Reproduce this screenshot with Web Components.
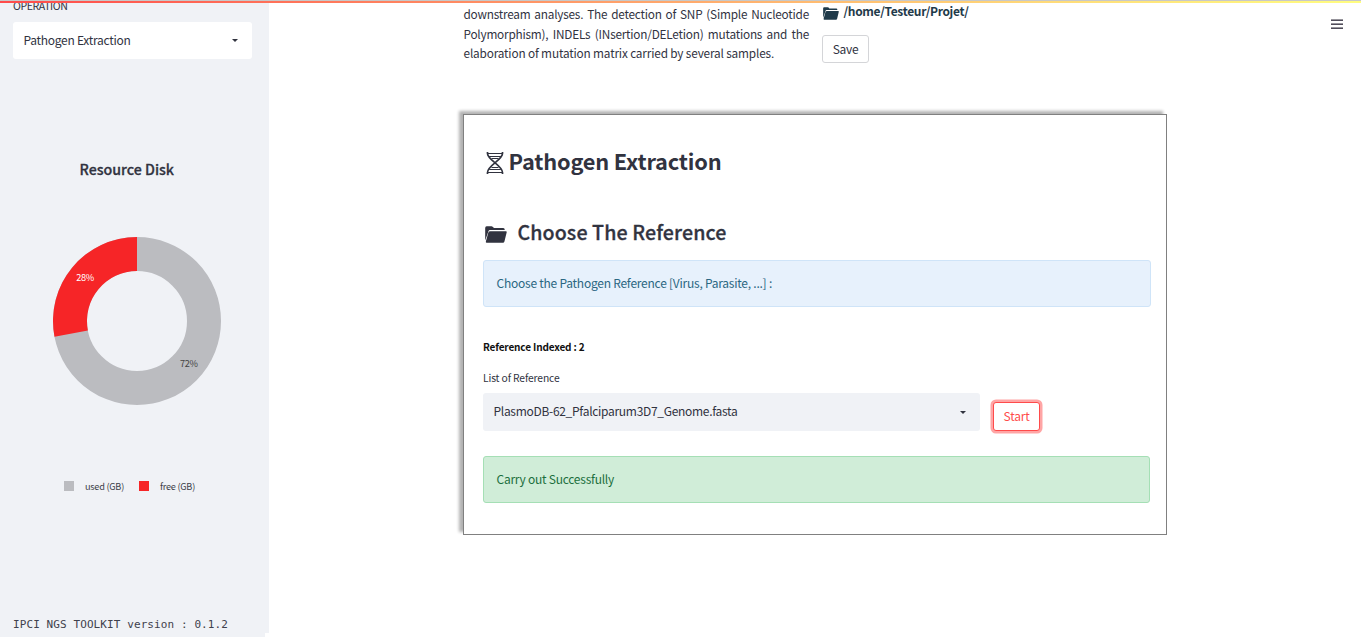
<!DOCTYPE html>
<html lang="en">
<head>
<meta charset="utf-8">
<title>IPCI NGS Toolkit</title>
<style>
html,body{margin:0;height:100%;overflow:hidden;background:#fff}
body{font-family:"Noto Sans CJK SC","Noto Sans",sans-serif;color:#31333f;font-size:12px}
</style>
</head>
<body>
<ngs-app></ngs-app>
<script>
function define(name, html, ready) {
  const t = document.createElement('template');
  t.innerHTML = html;
  customElements.define(name, class extends HTMLElement {
    connectedCallback() {
      if (this.shadowRoot) return;
      this.attachShadow({mode: 'open'}).append(t.content.cloneNode(true));
      if (ready) ready(this);
    }
  });
}

/* One line of text, tracked so that it spans the width given in "w". */
define('text-line', `<style>:host{display:block;white-space:pre;width:max-content}span{display:inline-block}</style><span><slot></slot></span>`, el => {
  const w = +el.getAttribute('w'), n = el.textContent.length;
  if (!w) return;
  const s = el.shadowRoot.querySelector('span');
  const now = s.getBoundingClientRect().width;
  s.style.letterSpacing = ((w - now) / n).toFixed(3) + 'px';
});

define('folder-icon', `<style>:host{display:block;flex:none}svg{display:block;width:100%;height:100%}</style>
<svg viewBox="0 0 23 17" preserveAspectRatio="none"><path fill="currentColor" d="M1.7.2h5.1q.7 0 1.2.5l1.1 1.1q.4.3 1 .3h9q1.5 0 1.5 1.5v.4H5.2q-1.2 0-1.6 1.2L.2 14.5V1.9Q.2.2 1.7.2z"/><path fill="currentColor" d="M5.6 5.2h16.3q1 0 .8 1l-2.4 9.2q-.3 1.3-1.6 1.3H1.8q-1.2 0-.9-1.2L3.5 6.6q.4-1.4 2.1-1.4z"/></svg>`);

define('dna-icon', `<style>:host{display:block;flex:none;width:18px;height:22px}svg{display:block}</style>
<svg width="18" height="22" viewBox="0 0 18 22" fill="none" stroke="currentColor"><path stroke-width="1.700" d="M1.500 0v1.500C1.500 8 16.500 13.500 16.500 20.500V22M16.500 0v1.500C16.500 8 1.500 13.500 1.500 20.500V22"/><path stroke-width="1.100" d="M2 1.500h14M3 4.500h12M5.500 6.500h7M5.500 15.500h7M3.200 17.500h11.600M2 20.500h14"/></svg>`);

define('select-box', `<style>
:host{display:flex;align-items:center;justify-content:space-between;box-sizing:border-box;padding:0 14px 0 10.500px;border-radius:3px}
i{width:0;height:0;border:3px solid transparent;border-top:3.500px solid #31333f;border-bottom:0}
::slotted(*){margin-top:-2px}
</style><slot></slot><i></i>`);

define('alert-box', `<style>
:host{display:flex;align-items:center;box-sizing:border-box;height:47px;padding:0 12.500px;border:1px solid;border-radius:3px}
:host([kind=info]){background:#e7f1fc;border-color:#cfe4f8}:host([kind=success]){background:#d0edd8;border-color:#a5dfb5}
::slotted(*){color:#2b6782;margin-top:-2px}:host([kind=success]) ::slotted(*){color:#1c6f3e}
</style><slot></slot>`);

define('push-button', `<style>
button{display:flex;align-items:center;justify-content:center;box-sizing:border-box;width:47px;height:28px;padding:0 0 2px;background:#fff;border:1px solid #d4d5d8;border-radius:3px;font:inherit;color:inherit}
:host{display:block}
:host([focused]) button{height:29px;color:#ff4b4b;border-color:#ff4b4b;box-shadow:0 0 0 2.500px rgba(255,75,75,.5)}
</style><button><slot></slot></button>`);

define('disk-chart', `<style>
:host{display:flex;flex-direction:column;align-items:flex-start;color:#31333f}
.t{font-size:14.200px;font-weight:500;line-height:20px;margin-left:79.500px;-webkit-text-stroke:.3px}
svg{display:block;margin:58px 0 0 53px}
text{font-size:9.200px}
.legend{display:flex;align-items:center;margin:71px 0 0 64px;height:20px;font-size:9.200px;line-height:20px;color:#3c3e49}
i{width:10px;height:10px}
.a{background:#bbbcc0;margin-right:11px}.b{background:#f62527;margin:0 11px 0 15px}
</style>
<text-line class="t" w="94.5">Resource Disk</text-line>
<svg width="168" height="168" viewBox="0 0 168 168">
<circle cx="84" cy="84" r="67" fill="none" stroke="#bbbcc0" stroke-width="34"/>
<path d="M84 0A84 84 0 0 0 1.480 99.700L34.880 93.400A50 50 0 0 1 84 34z" fill="#f62527"/>
<text x="23.300" y="44" fill="#fff" textLength="18" lengthAdjust="spacing">28%</text>
<text x="127" y="130" fill="#444" textLength="18" lengthAdjust="spacing">72%</text>
</svg>
<div class="legend"><i class="a"></i><text-line w="39">used (GB)</text-line><i class="b"></i><text-line w="35">free (GB)</text-line></div>`);

define('side-bar', `<style>
:host{display:flex;flex-direction:column;position:relative;background:#f0f2f6;height:637px;overflow:hidden}
.op{font-size:10.600px;line-height:16px;margin:-2px 0 0 13px;height:16px}
select-box{background:#fff;margin:8px 17px 0 13px;height:37px}
disk-chart{margin-top:100px}
footer{margin:auto 0 3px 13px;line-height:18px;font-family:"DejaVu Sans Mono",monospace;font-size:11px;color:#3f414c}
.corner{position:absolute;right:0;bottom:0;width:4px;height:4px;background:#fff}
</style>
<text-line class="op" w="54.5">OPERATION</text-line>
<select-box><text-line w="107">Pathogen Extraction</text-line></select-box>
<disk-chart></disk-chart>
<footer><text-line w="215">IPCI NGS TOOLKIT version : 0.1.2</text-line></footer><div class="corner"></div>`);

define('intro-row', `<style>
:host{display:flex;height:114px;box-sizing:border-box;overflow:hidden}
.p{width:345.500px;padding:4px 0 0 .5px;line-height:19.500px;font-size:11.800px}
.p div{text-align:justify;text-align-last:justify;letter-spacing:-.22px}
.r{margin-left:13px}
.path{display:flex;align-items:center;height:20px;color:#1f3a4a;font-weight:700}
folder-icon{width:16px;height:13px;margin:6px 4.500px 0 1px}
push-button{margin-top:15px}
</style>
<div class="p"><div>downstream analyses. The detection of SNP (Simple Nucleotide</div><div>Polymorphism), INDELs (INsertion/DELetion) mutations and the</div><text-line w="310.500">elaboration of mutation matrix carried by several samples.</text-line></div>
<div class="r"><div class="path"><folder-icon></folder-icon><text-line w="125">/home/Testeur/Projet/</text-line></div><push-button><text-line w="25.500">Save</text-line></push-button></div>`);

define('pathogen-card', `<style>
:host{display:block;box-sizing:border-box;width:704px;height:421px;border:1px solid #808080;background:#fff;padding:0 15px 0 19px;box-shadow:-4px -3px 3px rgba(0,0,0,.3)}
h1,h2{display:flex;align-items:center;margin:0}
h1{font-size:21.800px;font-weight:700;line-height:32px;height:32px;padding:30px 0 0 3px}
h1 dna-icon{margin:4px 4.500px 0 0}
h2{font-size:19.600px;font-weight:500;line-height:30px;height:30px;padding:40px 0 0 2px;-webkit-text-stroke:.3px}
h2 folder-icon{width:22px;height:17px;margin:5px 10.500px 0 0}
alert-box[kind=info]{margin-top:13px}
.count{font-size:10px;font-weight:700;color:#111;line-height:16px;margin-top:32px}
.label{font-size:10.300px;line-height:16px;margin-top:15px}
.row{display:flex;gap:13px;margin-top:7px;height:38px}
select-box{width:497px;height:38px;background:#f0f2f6}
select-box text-line{margin-top:-3px}
push-button{margin-top:9px}
alert-box[kind=success]{margin:25px 1px 0 0}
</style>
<h1><dna-icon></dna-icon><text-line w="213">Pathogen Extraction</text-line></h1>
<h2><folder-icon></folder-icon><text-line w="209">Choose The Reference</text-line></h2>
<alert-box kind="info"><text-line w="275.500">Choose the Pathogen Reference [Virus, Parasite, ...] :</text-line></alert-box>
<text-line class="count" w="101.500">Reference Indexed : 2</text-line>
<text-line class="label" w="76.500">List of Reference</text-line>
<div class="row"><select-box><text-line w="244">PlasmoDB-62_Pfalciparum3D7_Genome.fasta</text-line></select-box><push-button focused><text-line w="26">Start</text-line></push-button></div>
<alert-box kind="success"><text-line w="117.500">Carry out Successfully</text-line></alert-box>`);

define('ngs-app', `<style>
:host{display:grid;grid-template-columns:269px 1fr;height:637px;position:relative}
main{padding-left:194px}
.bar{position:absolute;left:0;right:0;top:0;height:2px;border-top:1px solid #c8c8c8;background:linear-gradient(90deg,#ff4b4b,#ffa06a 45%,#ffe07a 80%,#fffd80)}
.menu{position:absolute;left:1331px;top:19px;width:12px;height:10px;display:flex;flex-direction:column;justify-content:space-between}
.menu i{height:1px;background:#504d5a;border-top:1px solid #96949b}
</style>
<side-bar></side-bar><main><intro-row></intro-row><pathogen-card></pathogen-card></main><div class="bar"></div><div class="menu"><i></i><i></i><i></i></div>`);
</script>
</body>
</html>
